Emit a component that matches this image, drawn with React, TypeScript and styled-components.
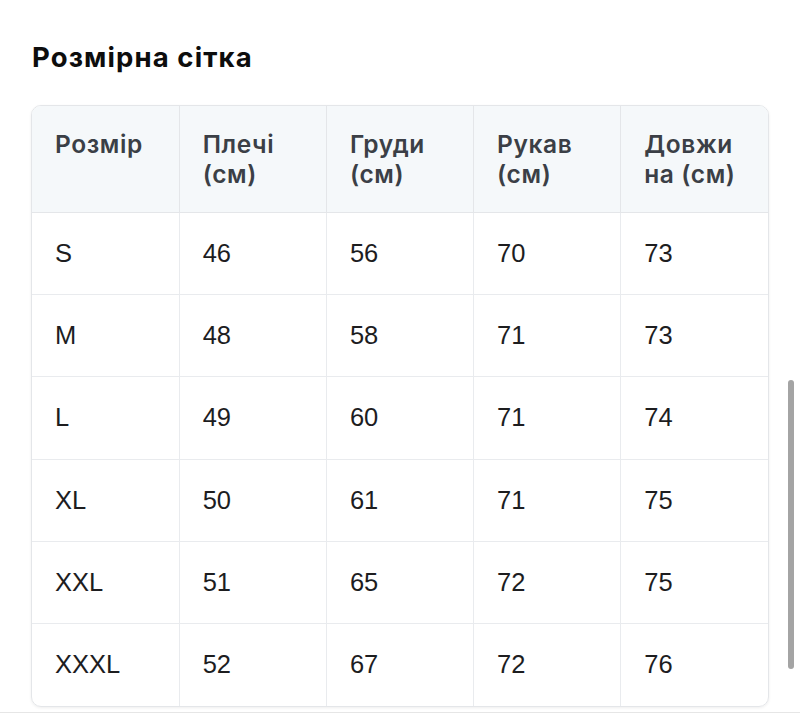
import React from "react";
import styled, { createGlobalStyle } from "styled-components";

const Global = createGlobalStyle`
  html, body { margin: 0; padding: 0; background: #ffffff; }
  body { font-family: "Liberation Sans", Arial, sans-serif; }
`;

const Page = styled.div`
  width: 800px;
  height: 714px;
  overflow: hidden;
  position: relative;
  box-sizing: border-box;
  padding-top: 41px;
`;

const Title = styled.h2`
  margin: 0 0 31px 32px;
  font-family: "Inter", "Noto Sans", sans-serif;
  font-weight: 700;
  font-size: 27.5px;
  line-height: 33px;
  color: #0d0d0d;
  letter-spacing: 1.1px;
`;

const Card = styled.div`
  margin: 0 31px;
  width: 738px;
  box-sizing: border-box;
  border: 1px solid #e4e6e9;
  border-radius: 10px;
  overflow: hidden;
  box-shadow: 0 1px 3px rgba(0, 0, 0, 0.07);
`;

const Table = styled.table`
  width: 100%;
  table-layout: fixed;
  border-collapse: collapse;
`;

const Th = styled.th<{ $last?: boolean }>`
  background: #f5f8fa;
  text-align: left;
  vertical-align: top;
  padding: 23px 12px 23px 23px;
  height: 60px;
  font-family: "Inter", "Noto Sans", sans-serif;
  font-weight: 600;
  font-size: 24.5px;
  line-height: 30px;
  letter-spacing: 0.6px;
  color: #3b3f46;
  border-bottom: 1px solid #e4e6e9;
  border-right: ${(p) => (p.$last ? "none" : "1px solid #e4e6e9")};
`;

const Td = styled.td<{ $last?: boolean; $lastRow?: boolean }>`
  height: 82.2px;
  box-sizing: border-box;
  padding: 0 20px 0 23px;
  vertical-align: middle;
  font-family: "Liberation Sans", Arial, sans-serif;
  font-size: 25.5px;
  color: #1d1d1f;
  border-bottom: ${(p) => (p.$lastRow ? "none" : "1px solid #e9ebee")};
  border-right: ${(p) => (p.$last ? "none" : "1px solid #e9ebee")};
`;

const Divider = styled.div`
  margin-top: 5px;
  border-top: 1px solid #e6e6e6;
  width: 100%;
`;

const ScrollThumb = styled.div`
  position: absolute;
  right: 6px;
  top: 380px;
  width: 6px;
  height: 289px;
  border-radius: 3px;
  background: #a4a4a4;
`;

const headers: React.ReactNode[] = [
  "Розмір",
  "Плечі (см)",
  "Груди (см)",
  "Рукав (см)",
  <>
    Довжи<wbr />на (см)
  </>,
];

const rows = [
  ["S", "46", "56", "70", "73"],
  ["M", "48", "58", "71", "73"],
  ["L", "49", "60", "71", "74"],
  ["XL", "50", "61", "71", "75"],
  ["XXL", "51", "65", "72", "75"],
  ["XXXL", "52", "67", "72", "76"],
];

export default function App() {
  return (
    <>
      <Global />
      <Page>
        <Title>Розмірна сітка</Title>
        <Card>
          <Table>
            <thead>
              <tr>
                {headers.map((h, i) => (
                  <Th key={i} $last={i === headers.length - 1}>
                    {h}
                  </Th>
                ))}
              </tr>
            </thead>
            <tbody>
              {rows.map((r, ri) => (
                <tr key={ri}>
                  {r.map((c, ci) => (
                    <Td key={ci} $last={ci === r.length - 1} $lastRow={ri === rows.length - 1}>
                      {c}
                    </Td>
                  ))}
                </tr>
              ))}
            </tbody>
          </Table>
        </Card>
        <Divider />
        <ScrollThumb />
      </Page>
    </>
  );
}
